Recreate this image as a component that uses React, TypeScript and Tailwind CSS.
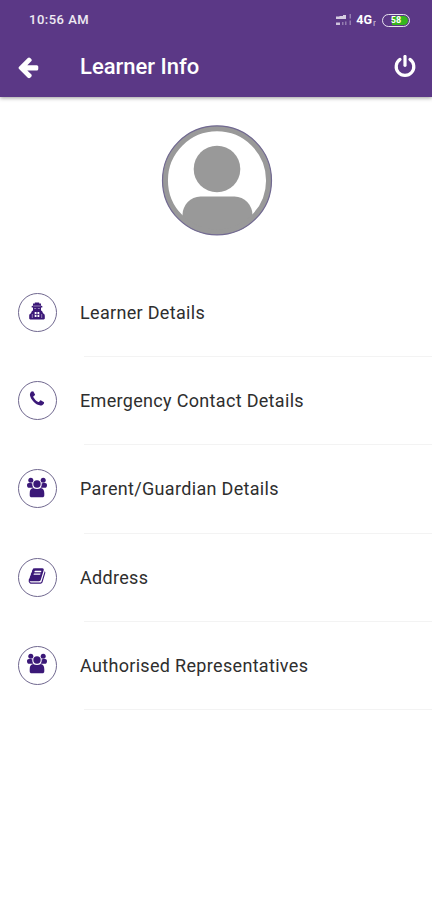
import type { ReactNode } from 'react';

interface IconProps {
  className?: string;
}

interface MenuItem {
  id: string;
  label: string;
  icon: ReactNode;
}

function ArrowLeftIcon({ className }: IconProps) {
  return (
    <svg viewBox="0 0 1792 1792" fill="currentColor" className={className}>
      <path d="M1664 896v128q0 53-32.5 90.5t-84.5 37.5h-704l293 294q38 36 38 90t-38 90l-75 76q-37 37-90 37-52 0-91-37l-651-652q-37-37-37-90 0-52 37-91l651-650q38-38 91-38 52 0 90 38l75 74q38 38 38 91t-38 91l-293 293h704q52 0 84.5 37.5t32.5 90.5z" />
    </svg>
  );
}

function PowerIcon({ className }: IconProps) {
  return (
    <svg
      viewBox="0 0 24 24"
      fill="none"
      stroke="currentColor"
      strokeWidth="3.2"
      strokeLinecap="round"
      className={className}
    >
      <path d="M7 4.400a8.800 8.800 0 1 0 10 0" />
      <path d="M12 1.500v8.800" />
    </svg>
  );
}

function LearnerIcon() {
  return (
    <svg viewBox="0 0 16 18" className="h-[18px] w-4">
      <path
        fill="currentColor"
        d="M4 1.500h1.800V.5h4.400v1H12v2.200l1.300.4v1.500H12v2.900c.9.300 1.400 1 1.700 1.900l.5 1.200c1 .3 1.600 1.200 1.600 2.400v2.300c0 .7-.4 1.200-1.100 1.200H1.300c-.7 0-1.100-.5-1.100-1.200V14c0-1.200.6-2.100 1.600-2.400l.5-1.200c.3-.9.8-1.600 1.700-1.900V5.600H2.700V4.100L4 3.700z"
      />
      <path
        stroke="#fff"
        strokeWidth=".7"
        opacity=".65"
        d="M4.300 4h7.400M5.200 6.500h2M8.800 6.500h2M3.300 12v4M12.700 12v4"
      />
      <path fill="#fff" d="M5.700 10h1.800v5H5.700zM8.500 10h1.800v5H8.500z" />
      <path fill="currentColor" d="M5.500 12.100h5v.8h-5z" />
    </svg>
  );
}

function PhoneIcon() {
  return (
    <svg
      viewBox="0 0 1792 1792"
      fill="currentColor"
      className="h-[18px] w-[18px]"
    >
      <path d="M1600 1240q0 27-10 70.500t-21 68.500q-21 50-122 106-94 51-186 51-27 0-53-3.500t-57.500-12.500-47-14.500-55.500-20.500-49-18q-98-35-175-83-127-79-264-216t-216-264q-48-77-83-175-3-9-18-49t-20.500-55.500-14.500-47-12.500-57.500-3.500-53q0-92 51-186 56-101 106-122 25-11 68.500-21t70.500-10q14 0 21 3 18 6 53 76 11 19 30 54t35 63.500 31 53.500q3 4 17.500 25t21.500 35.500 7 28.500q0 20-28.500 50t-62 55-62 53-28.500 46q0 9 5 22.500t8.500 20.500 14 24 11.500 19q76 137 174 235t235 174q2 1 19 11.500t24 14 20.500 8.500 22.500 5q18 0 46-28.500t53-62 55-62 50-28.500q14 0 28.500 7t35.500 21.500 25 17.500q25 15 53.500 31t63.500 35 54 30q70 35 76 53 3 7 3 21z" />
    </svg>
  );
}

function GroupIcon() {
  return (
    <svg viewBox="0 0 22 21" fill="currentColor" className="h-[21px] w-[22px]">
      <circle cx="4.800" cy="3.200" r="2.500" />
      <circle cx="17.200" cy="3.200" r="2.500" />
      <circle cx="11" cy="7" r="3.700" />
      <path d="M1 8.200c0-1.500.8-2.200 1.900-2.200h1.900c.7 0 1.200.2 1.600.6-.3 1.600.1 3.100 1.100 4.200H3.400c-1.600 0-2.400-1-2.400-2.600zM21 8.200c0-1.500-.8-2.200-1.900-2.200h-1.900c-.7 0-1.200.2-1.600.6.3 1.600-.1 3.100-1.100 4.200h4.100c1.600 0 2.400-1 2.400-2.600z" />
      <path d="M3.700 16.200c0-3.400 1.300-5.100 3.500-5.300 2.100 1.400 5.500 1.400 7.600 0 2.200.2 3.500 1.900 3.500 5.300v2c0 1.300-.8 2.100-2 2.100H5.700c-1.200 0-2-.8-2-2.100z" />
    </svg>
  );
}

function BookIcon() {
  return (
    <svg
      viewBox="0 0 1792 1792"
      fill="currentColor"
      className="h-[18px] w-[18px]"
    >
      <path d="M1703 478q40 57 18 129l-275 906q-19 64-76.500 107.500t-122.500 43.500h-923q-77 0-148.500-53.500t-99.500-131.500q-24-67-2-127 0-4 3-27t4-37q1-8-3-21.500t-3-19.500q2-11 8-21t16.500-23.500 16.500-23.500q23-38 45-91.500t30-91.500q3-10 .5-30t-.5-28q3-11 17-28t17-23q21-36 42-92t25-90q1-9-2.500-32t.5-28q4-13 22-30.500t22-22.500q19-26 42.500-84.500t27.500-96.500q1-8-3-25.500t-2-26.500q2-8 9-18t18-23 17-21q8-12 16.500-30.500t15-35 16-36 19.500-32 26.500-23.500 36-11.500 47.500 5.500l-1 3q38-9 51-9h761q74 0 114 56t18 130l-274 906q-36 119-71.500 153.500t-128.500 34.500h-869q-27 0-38 15-11 16-1 43 24 70 144 70h923q29 0 56-15.500t35-41.500l300-987q7-22 5-57 38 15 59 43zm-1064 2q-4 13 2 22.500t20 9.500h608q13 0 25.500-9.500t16.500-22.500l21-64q4-13-2-22.500t-20-9.500h-608q-13 0-25.500 9.500t-16.500 22.500zm-83 256q-4 13 2 22.500t20 9.500h608q13 0 25.500-9.500t16.500-22.500l21-64q4-13-2-22.500t-20-9.500h-608q-13 0-25.500 9.500t-16.500 22.500z" />
    </svg>
  );
}

const menuItems: MenuItem[] = [
  { id: 'learner', label: 'Learner Details', icon: <LearnerIcon /> },
  { id: 'emergency', label: 'Emergency Contact Details', icon: <PhoneIcon /> },
  { id: 'parent', label: 'Parent/Guardian Details', icon: <GroupIcon /> },
  { id: 'address', label: 'Address', icon: <BookIcon /> },
  {
    id: 'representatives',
    label: 'Authorised Representatives',
    icon: <GroupIcon />,
  },
];

function StatusBar() {
  return (
    <div className="flex h-10 items-center justify-between pl-[29px] pr-[22px]">
      <span className="text-[13px] font-medium tracking-[0.5px] text-white/90">
        10:56 AM
      </span>
      <div className="flex items-center">
        <svg viewBox="0 0 18 14" fill="#fff" className="mr-[3px] h-3.5 w-[18px]">
          <path
            opacity=".75"
            d="M1 3.500h3.500V6H1zM4.500 3H8v3H4.500zM8 2h3v4H8z"
          />
          <path opacity=".7" d="M1 9.500h4V12H1z" />
          <path
            opacity=".35"
            d="M7 9h1.500v3H7zM10 8.500h1.500V12H10zM14.500 1H16v4.500h-1.500zM14.500 7.500H16V12h-1.500z"
          />
        </svg>
        <span className="text-[12.500px] font-bold leading-none">4G</span>
        <span className="ml-px mr-1.5 mt-1.5 text-[9px] leading-none opacity-70">
          r
        </span>
        <div className="flex h-[13px] w-7 rounded-full border-[1.5px] border-white/85 p-px">
          <div className="flex flex-1 items-center justify-center rounded-full bg-linear-to-r from-transparent from-35% to-[#36b51d] to-35% text-[9px] font-bold leading-none">
            58
          </div>
        </div>
      </div>
    </div>
  );
}

function Avatar() {
  return (
    <svg viewBox="0 0 112 112" className="h-28 w-28">
      <defs>
        <clipPath id="avatar-clip">
          <circle cx="56" cy="56" r="54" />
        </clipPath>
      </defs>
      <g clipPath="url(#avatar-clip)" fill="#999">
        <circle cx="56" cy="45" r="23.300" />
        <path d="M21.500 112V91c0-10 8-18.500 18-18.500h34c10 0 18 8.500 18 18.500v21z" />
      </g>
      <circle
        cx="56"
        cy="56.400"
        r="51.800"
        fill="none"
        stroke="#999"
        strokeWidth="5.500"
      />
      <circle
        cx="56"
        cy="56.400"
        r="54.500"
        fill="none"
        stroke="#716991"
        strokeWidth="1.200"
      />
    </svg>
  );
}

export default function App() {
  return (
    <div className="min-h-[900px] w-full bg-white font-['Roboto',sans-serif]">
      <header className="h-[97px] bg-[#5b3886] text-white shadow-[0_1px_4px_rgba(0,0,0,0.4)]">
        <StatusBar />
        <div className="flex h-[53px] items-center pl-4 pr-[15px]">
          <ArrowLeftIcon className="h-6 w-6" />
          <h1 className="ml-10 flex-1 text-[22px] font-medium leading-none">
            Learner Info
          </h1>
          <PowerIcon className="h-6 w-6" />
        </div>
      </header>
      <div className="flex justify-center pb-[33px] pl-0.5 pt-[27px]">
        <Avatar />
      </div>
      <ul>
        {menuItems.map((item) => (
          <li key={item.id} className="flex h-[88.200px]">
            <div className="flex w-20 items-center pb-px pl-[18px]">
              <div className="flex h-[39px] w-[39px] items-center justify-center rounded-full border border-[#70688f] pb-[3px] pr-px text-[#3b1878]">
                {item.icon}
              </div>
            </div>
            <div className="flex flex-1 flex-col">
              <div className="flex flex-1 items-center">
                <span className="text-[18px] tracking-[0.32px] text-[#2e2e2e]">
                  {item.label}
                </span>
              </div>
              <hr className="ml-1 border-t border-[#f3f3f3]" />
            </div>
          </li>
        ))}
      </ul>
    </div>
  );
}
